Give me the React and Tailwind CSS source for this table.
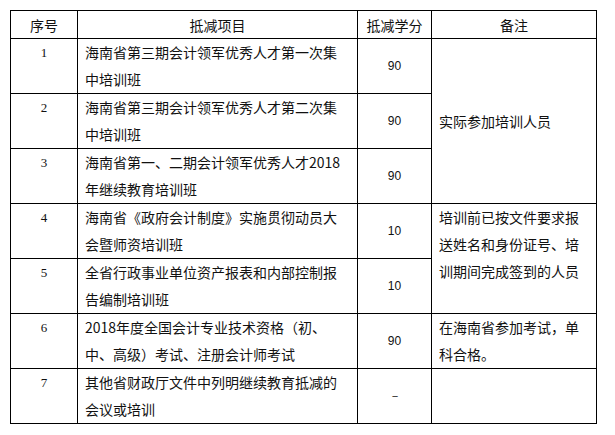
const rows = [
  { no: "1", item: "海南省第三期会计领军优秀人才第一次集中培训班", credit: "90" },
  { no: "2", item: "海南省第三期会计领军优秀人才第二次集中培训班", credit: "90" },
  { no: "3", item: "海南省第一、二期会计领军优秀人才2018年继续教育培训班", credit: "90" },
  { no: "4", item: "海南省《政府会计制度》实施贯彻动员大会暨师资培训班", credit: "10" },
  { no: "5", item: "全省行政事业单位资产报表和内部控制报告编制培训班", credit: "10" },
  { no: "6", item: "2018年度全国会计专业技术资格（初、中、高级）考试、注册会计师考试", credit: "90" },
  { no: "7", item: "其他省财政厅文件中列明继续教育抵减的会议或培训", credit: "－" },
];

const remarks = {
  0: { span: 3, text: "实际参加培训人员", align: "align-middle" },
  3: { span: 2, text: "培训前已按文件要求报送姓名和身份证号、培训期间完成签到的人员", align: "align-top" },
  5: { span: 1, text: "在海南省参加考试，单科合格。", align: "align-top" },
  6: { span: 1, text: "", align: "align-top" },
};

const cell = "border border-black p-0";

export default function App() {
  return (
    <div className="w-[615px] h-[435px] bg-white pt-[10px] pl-[10px] font-['Noto_Sans_CJK_SC',sans-serif] text-[14px] text-[#111]">
      <table className="border-collapse table-fixed w-[586px]">
        <colgroup>
          <col className="w-[67px]" />
          <col className="w-[280px]" />
          <col className="w-[74px]" />
          <col className="w-[165px]" />
        </colgroup>
        <thead>
          <tr className="h-[28px]">
            <th className={`${cell} font-normal text-center leading-[26px]`}>序号</th>
            <th className={`${cell} font-normal text-center leading-[26px]`}>抵减项目</th>
            <th className={`${cell} font-normal text-center leading-[26px]`}>抵减学分</th>
            <th className={`${cell} font-normal text-center leading-[26px]`}>备注</th>
          </tr>
        </thead>
        <tbody>
          {rows.map((r, i) => (
            <tr key={r.no} className="h-[55px]">
              <td className={`${cell} align-top text-center leading-[27px] text-[13px] font-['Liberation_Serif',serif]`}>
                {r.no}
              </td>
              <td className={`${cell} align-top px-[7px] leading-[27px]`}>{r.item}</td>
              <td className={`${cell} align-middle text-center text-[12px] leading-[16px] font-['Liberation_Sans',sans-serif]`}>
                {r.credit}
              </td>
              {remarks[i] && (
                <td
                  rowSpan={remarks[i].span}
                  className={`${cell} ${remarks[i].align} px-[7px] leading-[27px]`}
                >
                  {remarks[i].text}
                </td>
              )}
            </tr>
          ))}
        </tbody>
      </table>
    </div>
  );
}
